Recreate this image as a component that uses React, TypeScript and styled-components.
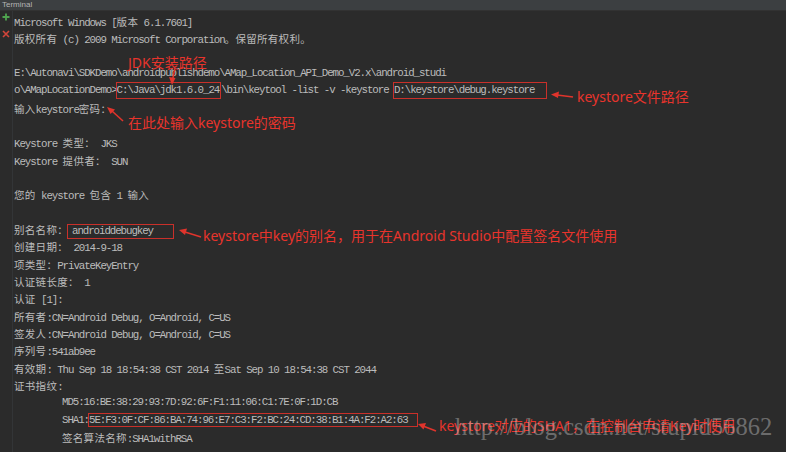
import styled, { createGlobalStyle } from "styled-components";

const GlobalStyle = createGlobalStyle`
  html, body {
    margin: 0;
    padding: 0;
    background: #2b2b2b;
  }
`;

type Seg = string | { box: string; padL: number; padR: number; h: number };
type Line = { indent?: number; segs: Seg[] };

const lines: Line[] = [
  { segs: ["Microsoft Windows [版本 6.1.7601]"] },
  { segs: ["版权所有 (c) 2009 Microsoft Corporation。保留所有权利。"] },
  { segs: [""] },
  { segs: ["E:\\Autonavi\\SDKDemo\\androidpublishdemo\\AMap_Location_API_Demo_V2.x\\android_studi"] },
  {
    segs: [
      "o\\AMapLocationDemo>",
      { box: "C:\\Java\\jdk1.6.0_24", padL: 0, padR: 1, h: 17 },
      "\\bin\\keytool -list -v -keystore ",
      { box: "D:\\keystore\\debug.keystore", padL: 0, padR: 12, h: 17 },
    ],
  },
  { segs: ["输入keystore密码："] },
  { segs: [""] },
  { segs: ["Keystore 类型： JKS"] },
  { segs: ["Keystore 提供者： SUN"] },
  { segs: [""] },
  { segs: ["您的 keystore 包含 1 输入"] },
  { segs: [""] },
  { segs: ["别名名称：", { box: "androiddebugkey", padL: 4, padR: 20, h: 15 }] },
  { segs: ["创建日期： 2014-9-18"] },
  { segs: ["项类型：PrivateKeyEntry"] },
  { segs: ["认证链长度： 1"] },
  { segs: ["认证 [1]:"] },
  { segs: ["所有者:CN=Android Debug, O=Android, C=US"] },
  { segs: ["签发人:CN=Android Debug, O=Android, C=US"] },
  { segs: ["序列号:541ab9ee"] },
  { segs: ["有效期: Thu Sep 18 18:54:38 CST 2014 至Sat Sep 10 18:54:38 CST 2044"] },
  { segs: ["证书指纹:"] },
  { indent: 48, segs: ["MD5:16:BE:38:29:93:7D:92:6F:F1:11:06:C1:7E:0F:1D:CB"] },
  {
    indent: 48,
    segs: [
      "SHA1:",
      { box: "5E:F3:0F:CF:86:BA:74:96:E7:C3:F2:BC:24:CD:38:B1:4A:F2:A2:63", padL: 0, padR: 9, h: 14 },
    ],
  },
  { indent: 48, segs: ["签名算法名称:SHA1withRSA"] },
];

// 한자 구간만 따로 폰트 지정
const renderText = (text: string) =>
  text
    .split(/([\u2E80-\u9FFF\u3000-\u303F\uFF00-\uFFEF]+)/)
    .map((part, i) => (i % 2 === 1 ? <Cjk key={i}>{part}</Cjk> : part));

export default function App() {
  return (
    <>
      <GlobalStyle />
      <Window>
        <TitleBar>Terminal</TitleBar>
        <Body>
          <Gutter>
            <svg width="8" height="8" viewBox="0 0 8 8">
              <path d="M4 0.5V7.5M0.5 4H7.5" stroke="#4fa34f" strokeWidth="1.8" />
            </svg>
            <svg width="8" height="8" viewBox="0 0 8 8">
              <path d="M1 1L7 7M7 1L1 7" stroke="#d2453a" strokeWidth="1.6" />
            </svg>
          </Gutter>
          <Console>
            {lines.map((line, i) => (
              <Row key={i} $indent={line.indent ?? 0}>
                {line.segs.map((s, j) =>
                  typeof s === "string" ? (
                    <span key={j}>{renderText(s)}</span>
                  ) : (
                    <Boxed key={j} $padL={s.padL} $padR={s.padR} $h={s.h}>
                      {s.box}
                    </Boxed>
                  )
                )}
              </Row>
            ))}
          </Console>
        </Body>

        <Arrows width="786" height="452" viewBox="0 0 786 452">
          <Arrow d="M175 68L172.5 80" />
          <Head points="172,85 169,77 175.5,78" />
          <Arrow d="M123 121L112 111" />
          <Head points="107,107 115,109.5 110.5,114" />
          <Arrow d="M573 97L557 95" />
          <Head points="551,94.5 559,91.5 558,98" />
          <Arrow d="M201 237L185 232" />
          <Head points="179,230 187,228.5 185,235" />
          <Arrow d="M436 431L423 426" />
          <Head points="418,424 426,423 423.5,429.5" />
        </Arrows>

        <Note $x={128} $y={55}>JDK安装路径</Note>
        <Note $x={128} $y={115}>在此处输入keystore的密码</Note>
        <Note $x={577} $y={89}>keystore文件路径</Note>
        <Note $x={203} $y={228}>keystore中key的别名，用于在Android Studio中配置签名文件使用</Note>
        <Note $x={439} $y={418}>keystore对应的SHA1，在控制台申请Key时使用</Note>
        <Watermark>http://blog.csdn.net/stupid56862</Watermark>
      </Window>
    </>
  );
}

const Window = styled.div`
  position: relative;
  width: 786px;
  height: 452px;
  overflow: hidden;
  background: #2b2b2b;
  display: flex;
  flex-direction: column;
`;

const TitleBar = styled.div`
  height: 10px;
  flex: none;
  background: #3c3f41;
  border-bottom: 1px solid #323232;
  color: #b4b4b4;
  font-family: "Liberation Sans", sans-serif;
  font-size: 8px;
  line-height: 10px;
  padding-left: 2px;
`;

const Body = styled.div`
  flex: 1;
  display: flex;
`;

const Gutter = styled.div`
  width: 12px;
  flex: none;
  border-right: 1px solid #333537;
  display: flex;
  flex-direction: column;
  align-items: center;
  gap: 9px;
  padding-top: 2px;
`;

const Console = styled.div`
  flex: 1;
  padding: 2px 0 0 1px;
  color: #bcbcbc;
  font-family: "Liberation Mono", monospace;
  font-size: 10.8px;
  letter-spacing: -1.08px;
`;

const Row = styled.div<{ $indent: number }>`
  height: 17.33px;
  line-height: 17.33px;
  white-space: pre;
  padding-left: ${(p) => p.$indent}px;
`;

const Cjk = styled.span`
  font-family: "Noto Sans CJK SC", sans-serif;
  font-size: 10.5px;
  letter-spacing: 0.3px;
`;

const Boxed = styled.span<{ $padL: number; $padR: number; $h: number }>`
  display: inline-block;
  box-sizing: border-box;
  height: ${(p) => p.$h}px;
  line-height: ${(p) => p.$h - 2}px;
  vertical-align: middle;
  border: 1px solid #c9302a;
  margin-left: -1px;
  padding: 0 ${(p) => p.$padR}px 0 ${(p) => p.$padL}px;
`;

const Arrows = styled.svg`
  position: absolute;
  left: 0;
  top: 0;
  pointer-events: none;
`;

const Arrow = styled.path`
  stroke: #e0342c;
  stroke-width: 1.6;
  fill: none;
`;

const Head = styled.polygon`
  fill: #e0342c;
`;

const Note = styled.div<{ $x: number; $y: number }>`
  position: absolute;
  left: ${(p) => p.$x}px;
  top: ${(p) => p.$y}px;
  color: #e8342c;
  font-family: "Noto Sans", "Noto Sans CJK SC", sans-serif;
  font-size: 14px;
  line-height: 16px;
  white-space: nowrap;
`;

const Watermark = styled.div`
  position: absolute;
  left: 455px;
  top: 413px;
  color: rgba(215, 215, 215, 0.4);
  font-family: "Liberation Serif", serif;
  font-size: 24.5px;
  line-height: 28px;
  white-space: nowrap;
`;
